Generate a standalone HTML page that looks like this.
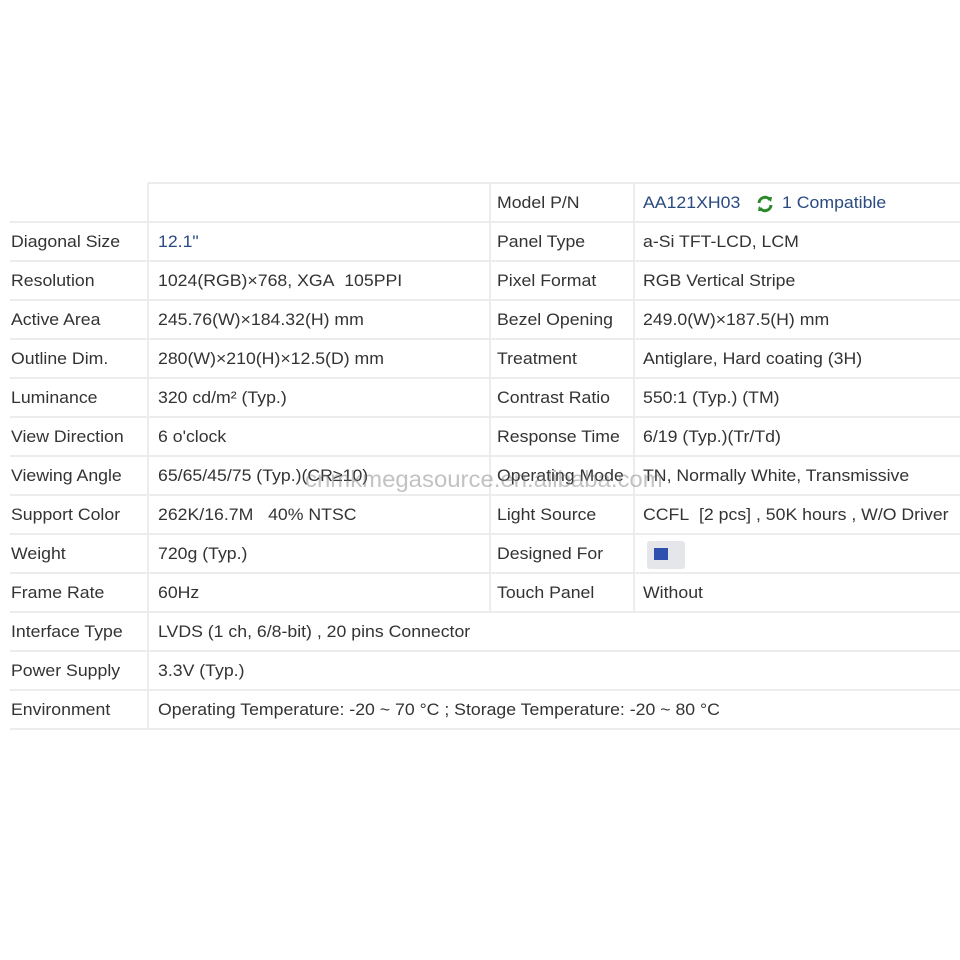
<!DOCTYPE html>
<html><head><meta charset="utf-8"><style>
body{margin:0;width:960px;height:960px;background:#fff;position:relative;overflow:hidden;font-family:"Liberation Sans",sans-serif;font-size:17px;color:#333}
.h{position:absolute;height:2px;background:#ececec}
.v{position:absolute;width:2px;background:#ececec}
.t{position:absolute;white-space:nowrap;line-height:20px;transform-origin:left;transform:scaleX(1.04)}
.l{color:#2a4a80}
.wm{position:absolute;left:305px;top:466px;font-size:23px;color:rgba(120,120,120,0.45);white-space:nowrap;transform-origin:left;transform:scaleX(1.04)}
</style></head><body>
<div class="h" style="left:148px;width:812px;top:182px"></div>
<div class="h" style="left:10px;width:950px;top:221px"></div>
<div class="h" style="left:10px;width:950px;top:260px"></div>
<div class="h" style="left:10px;width:950px;top:299px"></div>
<div class="h" style="left:10px;width:950px;top:338px"></div>
<div class="h" style="left:10px;width:950px;top:377px"></div>
<div class="h" style="left:10px;width:950px;top:416px"></div>
<div class="h" style="left:10px;width:950px;top:455px"></div>
<div class="h" style="left:10px;width:950px;top:494px"></div>
<div class="h" style="left:10px;width:950px;top:533px"></div>
<div class="h" style="left:10px;width:950px;top:572px"></div>
<div class="h" style="left:10px;width:950px;top:611px"></div>
<div class="h" style="left:10px;width:950px;top:650px"></div>
<div class="h" style="left:10px;width:950px;top:689px"></div>
<div class="h" style="left:10px;width:950px;top:728px"></div>
<div class="v" style="left:147px;top:183px;height:546px"></div>
<div class="v" style="left:489px;top:183px;height:429px"></div>
<div class="v" style="left:633px;top:183px;height:429px"></div>
<div class="t" style="left:497px;top:193px">Model P/N</div>
<div class="t l" style="left:643px;top:193px">AA121XH03</div>
<svg style="position:absolute;left:756px;top:195px" width="18" height="18" viewBox="0 0 18 18"><path d="M3 8a6 6 0 0 1 11-3M15 10a6 6 0 0 1-11 3" stroke="#2a8a2a" stroke-width="3" fill="none"/><path d="M11 2l5 0 -1 5z M7 16l-5 0 1-5z" fill="#2a8a2a"/></svg>
<div class="t l" style="left:782px;top:193px">1 Compatible</div>
<div class="t" style="left:11px;top:232px">Diagonal Size</div><div class="t l" style="left:158px;top:232px">12.1"</div>
<div class="t" style="left:497px;top:232px">Panel Type</div><div class="t" style="left:643px;top:232px">a-Si TFT-LCD, LCM</div>
<div class="t" style="left:11px;top:271px">Resolution</div><div class="t" style="left:158px;top:271px">1024(RGB)×768, XGA&nbsp; 105PPI</div>
<div class="t" style="left:497px;top:271px">Pixel Format</div><div class="t" style="left:643px;top:271px">RGB Vertical Stripe</div>
<div class="t" style="left:11px;top:310px">Active Area</div><div class="t" style="left:158px;top:310px">245.76(W)×184.32(H) mm</div>
<div class="t" style="left:497px;top:310px">Bezel Opening</div><div class="t" style="left:643px;top:310px">249.0(W)×187.5(H) mm</div>
<div class="t" style="left:11px;top:349px">Outline Dim.</div><div class="t" style="left:158px;top:349px">280(W)×210(H)×12.5(D) mm</div>
<div class="t" style="left:497px;top:349px">Treatment</div><div class="t" style="left:643px;top:349px">Antiglare, Hard coating (3H)</div>
<div class="t" style="left:11px;top:388px">Luminance</div><div class="t" style="left:158px;top:388px">320 cd/m² (Typ.)</div>
<div class="t" style="left:497px;top:388px">Contrast Ratio</div><div class="t" style="left:643px;top:388px">550:1 (Typ.) (TM)</div>
<div class="t" style="left:11px;top:427px">View Direction</div><div class="t" style="left:158px;top:427px">6 o'clock</div>
<div class="t" style="left:497px;top:427px">Response Time</div><div class="t" style="left:643px;top:427px">6/19 (Typ.)(Tr/Td)</div>
<div class="t" style="left:11px;top:466px">Viewing Angle</div><div class="t" style="left:158px;top:466px">65/65/45/75 (Typ.)(CR≥10)</div>
<div class="t" style="left:497px;top:466px">Operating Mode</div><div class="t" style="left:643px;top:466px">TN, Normally White, Transmissive</div>
<div class="wm">cnmkmegasource.en.alibaba.com</div>
<div class="t" style="left:11px;top:505px">Support Color</div><div class="t" style="left:158px;top:505px">262K/16.7M&nbsp;&nbsp; 40% NTSC</div>
<div class="t" style="left:497px;top:505px">Light Source</div><div class="t" style="left:643px;top:505px">CCFL&nbsp; [2 pcs] , 50K hours , W/O Driver</div>
<div class="t" style="left:11px;top:544px">Weight</div><div class="t" style="left:158px;top:544px">720g (Typ.)</div>
<div class="t" style="left:497px;top:544px">Designed For</div>
<div style="position:absolute;left:647px;top:541px;width:38px;height:28px;background:#e4e6ea;border-radius:3px"><div style="position:absolute;left:7px;top:7px;width:14px;height:12px;background:#3050b0"></div></div>
<div class="t" style="left:11px;top:583px">Frame Rate</div><div class="t" style="left:158px;top:583px">60Hz</div>
<div class="t" style="left:497px;top:583px">Touch Panel</div><div class="t" style="left:643px;top:583px">Without</div>
<div class="t" style="left:11px;top:622px">Interface Type</div><div class="t" style="left:158px;top:622px">LVDS (1 ch, 6/8-bit) , 20 pins Connector</div>
<div class="t" style="left:11px;top:661px">Power Supply</div><div class="t" style="left:158px;top:661px">3.3V (Typ.)</div>
<div class="t" style="left:11px;top:700px">Environment</div><div class="t" style="left:158px;top:700px">Operating Temperature: -20 ~ 70 °C ; Storage Temperature: -20 ~ 80 °C</div>
</body></html>
